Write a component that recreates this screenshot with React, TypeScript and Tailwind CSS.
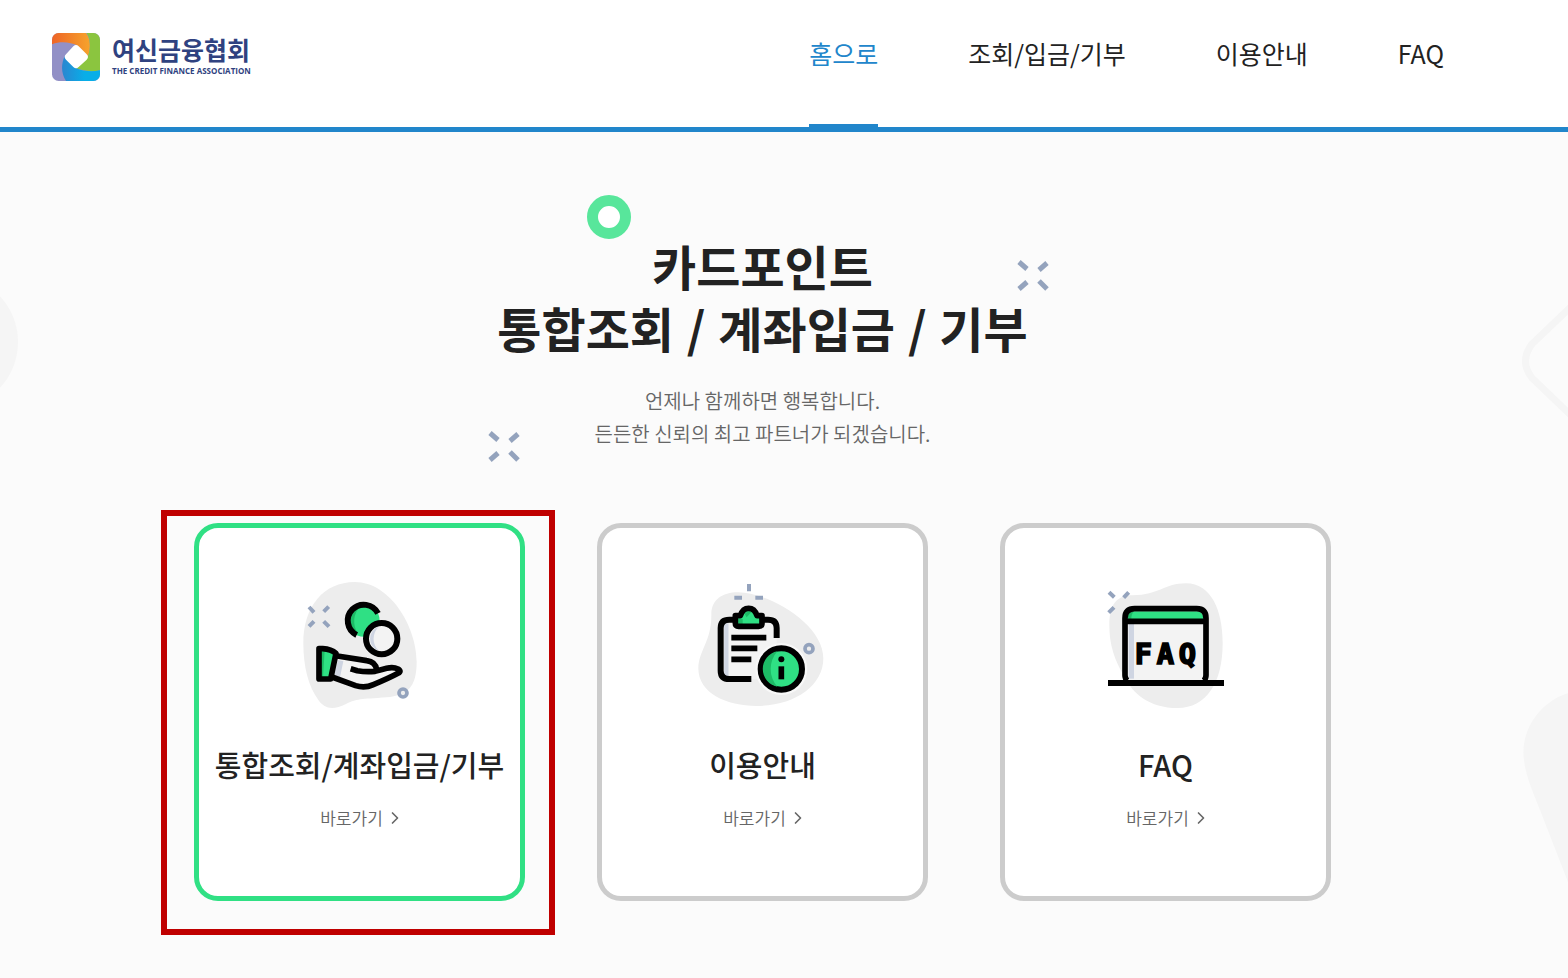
import type { ReactNode } from "react";
import { ChevronRight } from "lucide-react";

const navItems = ["홈으로", "조회/입금/기부", "이용안내", "FAQ"];

function LogoMark() {
  return (
    <svg viewBox="0 0 144 144" className="size-12" aria-hidden="true">
      <defs>
        <clipPath id="logo-frame">
          <rect width="144" height="144" rx="20" />
        </clipPath>
        <linearGradient id="logo-orange">
          <stop offset="0" stopColor="#ee6426" />
          <stop offset="1" stopColor="#f6a32c" />
        </linearGradient>
        <linearGradient id="logo-blue">
          <stop offset="0" stopColor="#2b86d0" />
          <stop offset="0.6" stopColor="#08aee8" />
        </linearGradient>
      </defs>
      <g clipPath="url(#logo-frame)">
        <rect width="144" height="144" fill="#9290c6" />
        <path d="M0 34 C30 22 58 30 74 36 L108 70 C118 42 114 16 102 0 H0 Z" fill="url(#logo-orange)" />
        <path d="M104 0 H144 V112 C116 118 92 112 72 106 L108 70 C118 42 114 16 104 0 Z" fill="#8bc53f" />
        <path d="M38 70 L72 106 C92 114 118 118 144 112 V144 H42 C26 118 28 92 38 70 Z" fill="url(#logo-blue)" />
      </g>
      <path d="M64 40 Q72 32 80 40 L104 64 Q112 72 104 80 L80 102 Q72 110 64 102 L42 80 Q34 72 42 64 Z" fill="#fff" />
    </svg>
  );
}

function Sparkle({ className }: { className: string }) {
  return (
    <svg viewBox="0 0 32 32" className={className} aria-hidden="true">
      <path d="M2 2 L10 9 M30 3 L22 10 M2 29 L10 22 M22 21 L30 29" stroke="#94a3bd" strokeWidth="5" />
    </svg>
  );
}

function DonateIcon() {
  return (
    <svg viewBox="0 0 420 450" className="h-[150px] w-[140px]" aria-hidden="true">
      <path
        d="M40 220 C40 110 100 36 195 36 C300 36 380 170 380 275 C380 355 350 375 290 382 C210 388 200 386 168 402 C130 420 105 418 85 390 C55 350 40 290 40 220 Z"
        fill="#ededed"
      />
      <path d="M57 111 L72 127 M116 110 L101 125 M57 169 L72 154 M101 154 L117 170" stroke="#94a3bd" strokeWidth="12" />
      <circle cx="221" cy="152" r="48" fill="#2fe084" />
      <path d="M212 108 A46 46 0 0 0 205 192 A64 64 0 0 1 212 108" fill="#1dbb66" />
      <path d="M264 130 A48 48 0 1 0 200 195" fill="none" stroke="#000" strokeWidth="18" />
      <circle cx="275" cy="206" r="47" fill="#f3f3f3" stroke="#000" strokeWidth="18" />
      <path d="M266 170 A38 38 0 0 0 266 242 A50 50 0 0 1 266 170" fill="#cfd5e2" />
      <path d="M142 258 L235 272 Q256 276 262 300 L320 292 Q334 296 328 312 L242 346 Q222 353 200 347 L128 320 Z" fill="#f3f3f3" />
      <path d="M144 270 L160 274 L150 322 L132 314 Z" fill="#cfd5e2" />
      <path d="M87 236 H98 Q124 238 140 248 L124 327 H87 Z" fill="#2fe084" />
      <path d="M92 240 L104 240 L99 322 H92 Z" fill="#1dbb66" />
      <path d="M87 236 H98 Q124 238 138 250 L122 327 H87 Z" fill="none" stroke="#000" strokeWidth="17" strokeLinejoin="round" />
      <path
        d="M142 258 L230 272 Q256 275 260 299 M182 296 L202 302 Q228 307 255 304 Q274 299 290 295 Q310 290 324 297 Q336 304 324 310 Q294 326 250 344 Q224 356 197 347 L126 321"
        fill="none"
        stroke="#000"
        strokeWidth="17"
        strokeLinejoin="round"
      />
      <circle cx="339" cy="369" r="12" fill="#ededed" stroke="#94a3bd" strokeWidth="11" />
    </svg>
  );
}

function GuideIcon() {
  return (
    <svg viewBox="0 0 435 450" className="h-[150px] w-[145px]" aria-hidden="true">
      <path
        d="M64 130 C66 90 95 67 145 67 C245 70 400 165 400 265 C400 350 310 408 200 408 C110 408 25 370 25 295 C26 240 66 215 64 130 Z"
        fill="#ededed"
      />
      <path d="M177 42 V64 M133 83 H156 M196 83 H219" stroke="#94a3bd" strokeWidth="12" />
      <path d="M92 160 H260 V327 H92 Z" fill="#f3f3f3" />
      <path d="M109 160 V318" stroke="#cfd5e2" strokeWidth="13" />
      <path d="M140 149 H118 Q92 149 92 174 V302 Q92 327 118 327 H184 M218 149 H234 Q260 149 260 174 V204" fill="none" stroke="#000" strokeWidth="18" />
      <path d="M124 203 H229 M124 235 H202 M124 268 H184" stroke="#000" strokeWidth="17" />
      <path d="M136 137 H151 Q158 115 176 115 Q194 115 201 137 H216 V160 Q216 169 206 169 H146 Q136 169 136 160 Z" fill="#2fe084" />
      <path d="M143 147 H158 V162 H143 Z M164 132 Q174 120 184 126 L170 142 Z" fill="#1dbb66" />
      <path
        d="M136 137 H151 Q158 115 176 115 Q194 115 201 137 H216 V160 Q216 169 206 169 H146 Q136 169 136 160 Z"
        fill="none"
        stroke="#000"
        strokeWidth="17"
        strokeLinejoin="round"
      />
      <circle cx="274" cy="297" r="78" fill="#f8f8f8" />
      <circle cx="274" cy="297" r="62" fill="#2fe084" stroke="#000" strokeWidth="18" />
      <path d="M262 244 A54 54 0 0 0 262 350 A80 80 0 0 1 262 244" fill="#1dbb66" />
      <circle cx="274" cy="268" r="9" />
      <path d="M274 289 V328" stroke="#000" strokeWidth="17" />
      <circle cx="357" cy="236" r="12" fill="#ededed" stroke="#94a3bd" strokeWidth="11" />
    </svg>
  );
}

function FaqIcon() {
  return (
    <svg viewBox="0 0 420 450" className="h-[150px] w-[140px]" aria-hidden="true">
      <path
        d="M40 165 C40 100 65 76 110 76 C190 75 205 40 270 40 C345 40 380 120 380 220 C380 340 330 414 245 414 C160 414 110 370 85 320 C55 270 40 225 40 165 Z"
        fill="#ededed"
      />
      <path d="M39 67 L55 82 M98 67 L83 83 M38 128 L54 112" stroke="#94a3bd" strokeWidth="12" />
      <path d="M87 145 Q87 116 116 116 H302 Q330 116 330 145 V332 H87 Z" fill="#f3f3f3" />
      <path d="M95 147 Q95 124 116 124 H302 Q322 124 322 147 Z" fill="#2fe084" />
      <path d="M95 147 Q95 124 114 124 Q106 132 106 147 Z" fill="#1dbb66" />
      <path d="M106 162 V326" stroke="#cfd5e2" strokeWidth="16" />
      <path d="M94 332 Q87 326 87 316 V145 Q87 116 116 116 H302 Q330 116 330 145 V316 Q330 326 323 332 M87 154 H330" fill="none" stroke="#000" strokeWidth="17" />
      <path d="M36 339 H384" stroke="#000" strokeWidth="18" />
      <text
        y="281"
        textAnchor="middle"
        className="font-['DejaVu_Sans_Mono',monospace] text-[86px] font-bold"
        stroke="#000"
        strokeWidth="5"
      >
        <tspan x="142">F</tspan>
        <tspan x="208">A</tspan>
        <tspan x="274">Q</tspan>
      </text>
    </svg>
  );
}

function ServiceCard({ title, icon, active = false }: { title: string; icon: ReactNode; active?: boolean }) {
  return (
    <li className="relative w-[331px]">
      <a
        href="#"
        className={`flex flex-col items-center rounded-3xl border-5 bg-white pt-[42px] pb-16 ${
          active ? "border-[#30e084]" : "border-[#cccccc]"
        }`}
      >
        {icon}
        <h2 className="mt-[22px] text-[29px] leading-[44px] font-medium whitespace-nowrap text-[#222]">{title}</h2>
        <span className="mt-[18px] flex items-center gap-0.5 text-[17px] leading-7 font-[350] text-[#666]">
          바로가기
          <ChevronRight className="-mr-1.5 size-5" strokeWidth={2} />
        </span>
      </a>
      {active && (
        <span className="pointer-events-none absolute -top-[13px] -right-[30px] -bottom-[34px] -left-[33px] border-6 border-[#c00000]" />
      )}
    </li>
  );
}

export default function App() {
  return (
    <div className="flex min-h-screen flex-col bg-[#fbfbfb] font-['Noto_Sans_CJK_KR',sans-serif]">
      <header className="flex items-start justify-between border-b-5 border-[#2186cb] bg-white pr-[124px] pl-[52px]">
        <a href="#" className="flex items-center gap-3 pt-[33px]">
          <LogoMark />
          <span className="flex flex-col pb-1 text-[#2f4280]">
            <strong className="text-[25px] leading-8 font-bold">여신금융협회</strong>
            <span className="font-['Open_Sans',sans-serif] text-[8px] leading-3 font-bold whitespace-nowrap">
              THE CREDIT FINANCE ASSOCIATION
            </span>
          </span>
        </a>
        <nav className="-mb-[5px] flex gap-[90px]">
          {navItems.map((item, i) => (
            <a
              key={item}
              href="#"
              className={`border-b-8 pt-[35px] pb-[53px] text-[25px] leading-9 whitespace-nowrap ${
                i === 0 ? "border-[#2186cb] text-[#2186cb]" : "border-transparent text-[#222]"
              }`}
            >
              {item}
            </a>
          ))}
        </nav>
      </header>

      <main className="relative grow overflow-hidden pr-[43px]">
        <svg viewBox="0 0 20 120" className="absolute top-[150px] left-0 h-[120px] w-5" aria-hidden="true">
          <ellipse cx="-42" cy="60" rx="60" ry="64" fill="#f5f5f5" />
        </svg>
        <svg viewBox="0 0 50 160" className="absolute top-[148px] right-0 h-[160px] w-[50px]" aria-hidden="true">
          <path d="M58 22 L14 64 Q1 81 14 98 L62 144" fill="none" stroke="#f5f5f5" strokeWidth="7" />
        </svg>
        <svg viewBox="0 0 50 200" className="absolute top-[556px] right-0 h-[200px] w-[50px]" aria-hidden="true">
          <path d="M50 5 C20 15 2 44 6 72 C8 90 16 106 22 122 L50 194 Z" fill="#f5f5f5" />
        </svg>

        <div className="relative mx-auto flex w-fit flex-col items-center pt-[102px] pb-[77px]">
          <span className="absolute top-[63px] left-[393px] size-11 rounded-full border-11 border-[#58e69b] bg-white" />
          <Sparkle className="absolute top-[128px] left-[823px] size-8" />
          <Sparkle className="absolute top-[299px] left-[294px] size-8" />

          <h1 className="text-center text-[48px] leading-[62px] font-bold text-[#222]">
            카드포인트
            <br />
            통합조회 <span className="mx-0.5">/</span> 계좌입금 <span className="mx-0.5">/</span> 기부
          </h1>
          <p className="mt-[26px] text-center text-[20px] leading-[33px] font-[350] text-[#666]">
            언제나 함께하면 행복합니다.
            <br />
            든든한 신뢰의 최고 파트너가 되겠습니다.
          </p>

          <ul className="mt-[73px] flex gap-[72px]">
            <ServiceCard title="통합조회/계좌입금/기부" icon={<DonateIcon />} active />
            <ServiceCard title="이용안내" icon={<GuideIcon />} />
            <ServiceCard title="FAQ" icon={<FaqIcon />} />
          </ul>
        </div>
      </main>
    </div>
  );
}
